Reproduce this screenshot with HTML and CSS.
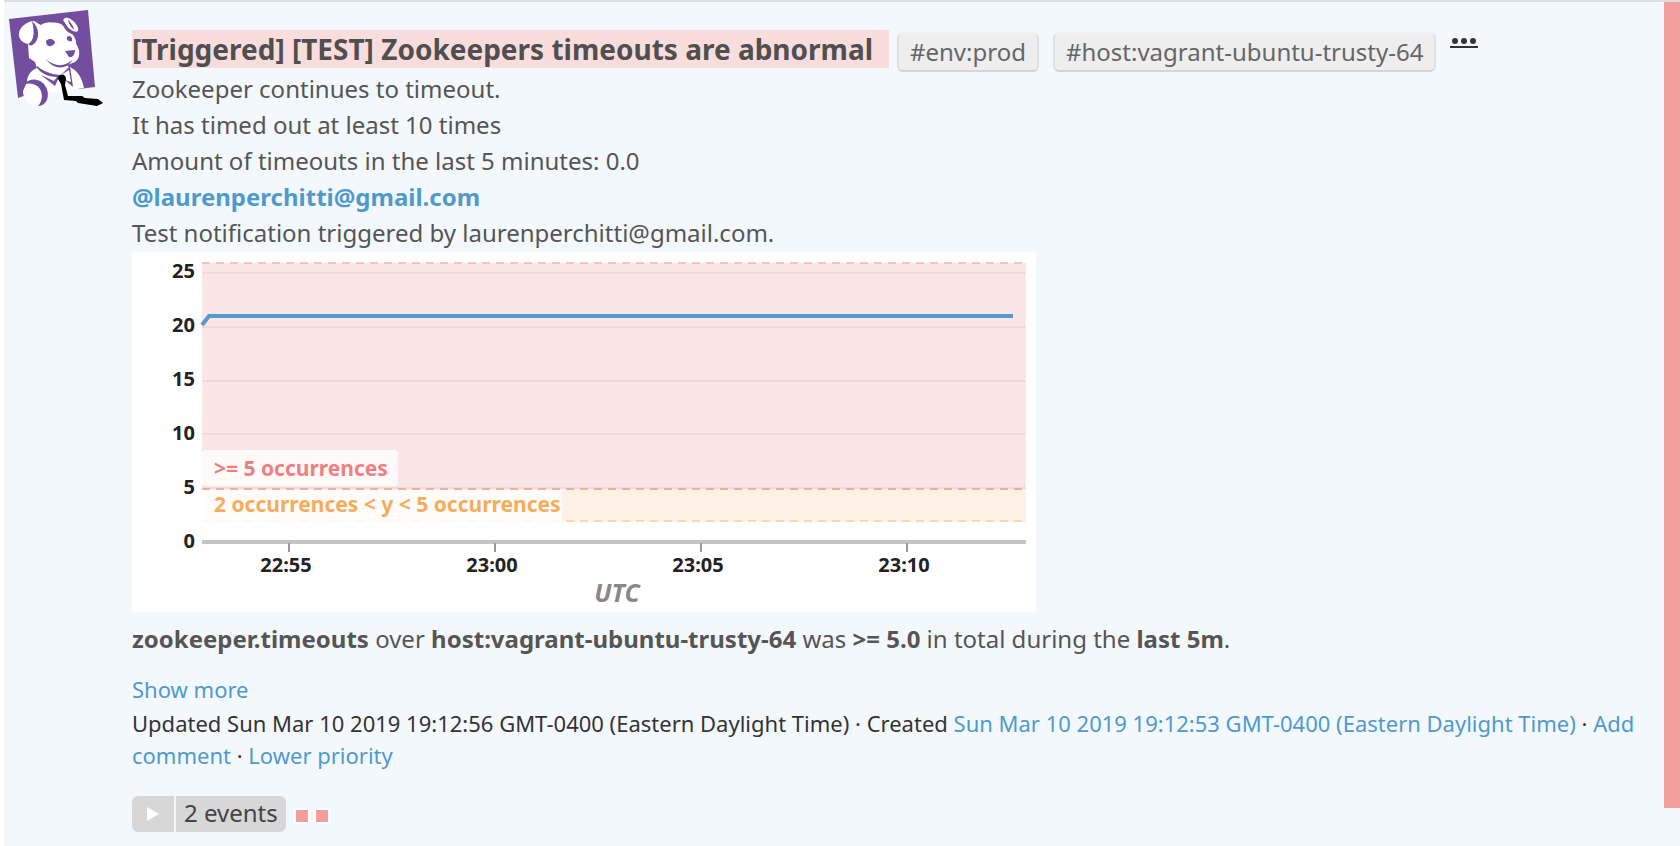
FILE: index.html
```html
<!DOCTYPE html>
<html lang="en">
<head>
<meta charset="utf-8">
<title>Event stream</title>
<link rel="stylesheet" href="styles.css">
</head>
<body>
<article class="event">
  <svg class="avatar" viewBox="0 0 104 110" role="img" aria-label="Datadog">
    <path fill="#734e9f" d="M9 19 88 10 95 87 79 89 60 80 35 92 18 98Z"/>
    <path fill="#fff" d="M19 33C20 27 26 22 33 21C36 21 38 24 41 25C45 21 56 22 61 24L67 29C73 34 76 38 76 43L79 50C80 57 78 62 70 64C67 65 66 66 70 67C78 71 82 78 84 88L48 93C48 99 45 106 38 106C28 106 23 99 23 91L27 82C27 76 31 70 37 68L35 62 29 58 28 44C23 43 18 39 19 33Z"/>
    <path fill="#fff" d="M63 20C66 16 69 18 72 20C76 23 79 28 78 31C75 33 70 30 67 26Z"/>
    <path fill="#734e9f" d="M32 21C39 27 40 37 35 43 32 46 30 46 28 44 34 41 35 33 32 21ZM62 20C64 27 69 31 76 33L75 35C68 33 63 30 62 20ZM68 20C70 21 74 27 74 29 71 28 69 24 68 20Z"/>
    <path fill="#734e9f" d="M46 41C50 37 55 40 55 43 51 48 46 47 46 41ZM67 37C70 34 73 38 72 41 69 42 66 40 67 37ZM65 51 75 50C75 55 72 58 69 57Z"/>
    <path fill="#734e9f" d="M46 59C54 67 65 67 72 60 69 69 54 71 46 59ZM37 66C43 71 50 74 60 75L55 86 41 75 54 81 57 77C48 77 41 73 37 68ZM61 75 70 66 73 87 65 80 71 82 69 70ZM24 84C32 76 43 79 47 89 50 99 45 106 38 106 46 98 42 80 24 84Z"/>
    <path fill="#000" d="M58 79C58 73 66 73 66 79L65 85 68 96 82 96 85 98 98 99 103 103 97 106 78 103 76 101 64 100 61 84Z"/>
  </svg>
  <div class="content">
    <header class="heading">
      <h1 class="title">[Triggered] [TEST] Zookeepers timeouts are abnormal</h1>
      <button class="tag" type="button">#env:prod</button>
      <button class="tag" type="button">#host:vagrant-ubuntu-trusty-64</button>
      <button class="more" type="button" aria-label="More"><svg width="28" height="14" viewBox="0 0 28 14"><path d="M0 10h28v2H0z"/><circle cx="5" cy="5" r="3"/><circle cx="14" cy="5" r="3"/><circle cx="23" cy="5" r="3"/></svg></button>
    </header>
    <div class="message">
      <p>Zookeeper continues to timeout.</p>
      <p>It has timed out at least 10 times</p>
      <p>Amount of timeouts in the last 5 minutes: 0.0</p>
      <p><a class="mention" href="#">@laurenperchitti@gmail.com</a></p>
      <p>Test notification triggered by laurenperchitti@gmail.com.</p>
    </div>
    <svg class="chart" viewBox="0 0 904 360" role="img" aria-label="Zookeeper timeouts">
      <rect class="critical" x="70" y="11" width="824" height="226"/>
      <rect class="warning" x="70" y="237" width="824" height="33"/>
      <path class="grid" d="M70 21h824M70 75h824M70 129h824M70 182h824M70 236h824"/>
      <path class="limit-top" d="M70 11h824"/>
      <path class="limit-critical" d="M70 237h824"/>
      <path class="limit-warning" d="M70 269h824"/>
      <rect class="label-box" x="70" y="198" width="196" height="36" rx="4"/>
      <rect class="label-box" x="70" y="238" width="360" height="32"/>
      <path class="series" d="M70 73 77 64H881"/>
      <path class="axis" d="M70 290h824"/>
      <path class="ticks" d="M157 291v9M363 291v9M569 291v9M775 291v9"/>
      <g class="y-labels">
        <text x="63" y="26">25</text><text x="63" y="80">20</text><text x="63" y="134">15</text>
        <text x="63" y="188">10</text><text x="63" y="242">5</text><text x="63" y="296">0</text>
      </g>
      <g class="x-labels">
        <text x="154" y="320">22:55</text><text x="360" y="320">23:00</text>
        <text x="566" y="320">23:05</text><text x="772" y="320">23:10</text>
      </g>
      <text class="critical-text" x="82" y="224">&gt;= 5 occurrences</text>
      <text class="warning-text" x="82" y="260">2 occurrences &lt; y &lt; 5 occurrences</text>
      <text class="zone" x="485" y="350">UTC</text>
    </svg>
    <p class="summary"><b>zookeeper.timeouts</b> over <b>host:vagrant-ubuntu-trusty-64</b> was <b>&gt;= 5.0</b> in total during the <b>last 5m</b>.</p>
    <p class="show-more"><a href="#">Show more</a></p>
    <p class="meta">Updated Sun Mar 10 2019 19:12:56 GMT-0400 (Eastern Daylight Time) · Created <a href="#">Sun Mar 10 2019 19:12:53 GMT-0400 (Eastern Daylight Time)</a> · <a href="#">Add comment</a> · <a href="#">Lower priority</a></p>
    <footer class="related">
      <button class="events" type="button">
        <span class="play"><svg width="12" height="14" viewBox="0 0 12 14"><path d="M0 0 12 7 0 14Z"/></svg></span>
        <span class="count">2 events</span>
      </button>
      <span class="mark"></span>
      <span class="mark"></span>
    </footer>
  </div>
  <div class="status"></div>
</article>
</body>
</html>
```
FILE: styles.css
```css
* { box-sizing: border-box; }
body {
  margin: 0;
  padding-left: 4px;
  background: #fff;
  color: #555;
  font: 24px/36px "Noto Sans", sans-serif;
}
p, h1 { margin: 0; }
a { color: #4f9acc; text-decoration: none; }
button { margin: 0; border: 0; font: inherit; cursor: pointer; }
.event {
  display: flex;
  align-items: stretch;
  min-height: 100vh;
  border-top: 2px solid #dcdddf;
  background: #f3f8fc;
}
.avatar { flex: none; width: 104px; height: 110px; margin: -2px 0 0 -4px; }
.content { flex: 1; min-width: 0; padding: 28px 28px 14px 28px; }
.status { flex: none; width: 16px; margin-bottom: 38px; background: #f39e9c; }
.heading { display: flex; align-items: flex-start; height: 41px; }
.title {
  margin-right: 8px;
  padding-right: 16px;
  background: #f9dddd;
  color: #4f4f4f;
  font-size: 28px;
  line-height: 38px;
}
.tag {
  height: 40px;
  margin: 2px 14px 0 0;
  padding: 0 11px;
  border: 2px solid #e0e0e0;
  border-top-color: #f0f0f0;
  border-bottom-color: #d5d5d5;
  border-radius: 6px;
  background: #eee;
  color: #666;
  line-height: 34px;
}
.more { height: 20px; padding: 6px 0 0; background: none; fill: #333; line-height: 0; }
.mention { font-weight: 700; }
.chart {
  display: block;
  width: 904px;
  max-width: 100%;
  margin-top: 1px;
  background: #fff;
  font-size: 20px;
  font-weight: 700;
}
.critical { fill: #fae6e7; }
.warning { fill: #fef0e4; }
.grid { stroke: #f0dadc; stroke-width: 2; }
.limit-top, .limit-critical, .limit-warning { stroke-width: 2; stroke-dasharray: 8 6; }
.limit-top { stroke: #f5c3c2; }
.limit-critical { stroke: #ecb09e; }
.limit-warning { stroke: #fad9ac; }
.label-box { fill: #fff; fill-opacity: .8; }
.series { fill: none; stroke: #549aca; stroke-width: 4; }
.axis { stroke: #c4c4c4; stroke-width: 4; }
.ticks { stroke: #999; stroke-width: 2; }
.y-labels { fill: #222; text-anchor: end; }
.x-labels { fill: #222; text-anchor: middle; }
.critical-text, .warning-text { font-size: 21px; }
.critical-text { fill: #f08080; }
.warning-text { fill: #f5ad5c; }
.zone { fill: #888; font-size: 25px; font-style: italic; text-anchor: middle; }
.summary { margin-top: 9px; }
.show-more { margin-top: 16px; font-size: 22px; line-height: 32px; }
.meta { margin-top: 2px; color: #333; font-size: 22px; line-height: 32px; }
.related { display: flex; align-items: center; gap: 4px; margin-top: 25px; }
.events {
  display: flex;
  height: 36px;
  margin-right: 4px;
  padding: 0;
  overflow: hidden;
  border-radius: 6px;
  background: #d7d7d7;
  color: #444;
}
.play { display: flex; align-items: center; justify-content: center; width: 44px; border-right: 2px solid #f3f8fc; fill: #fff; }
.count { padding: 0 8px; line-height: 34px; }
.mark { width: 16px; height: 16px; margin-top: 4px; border: 2px solid #fff; background: #f39e9c; }
```
